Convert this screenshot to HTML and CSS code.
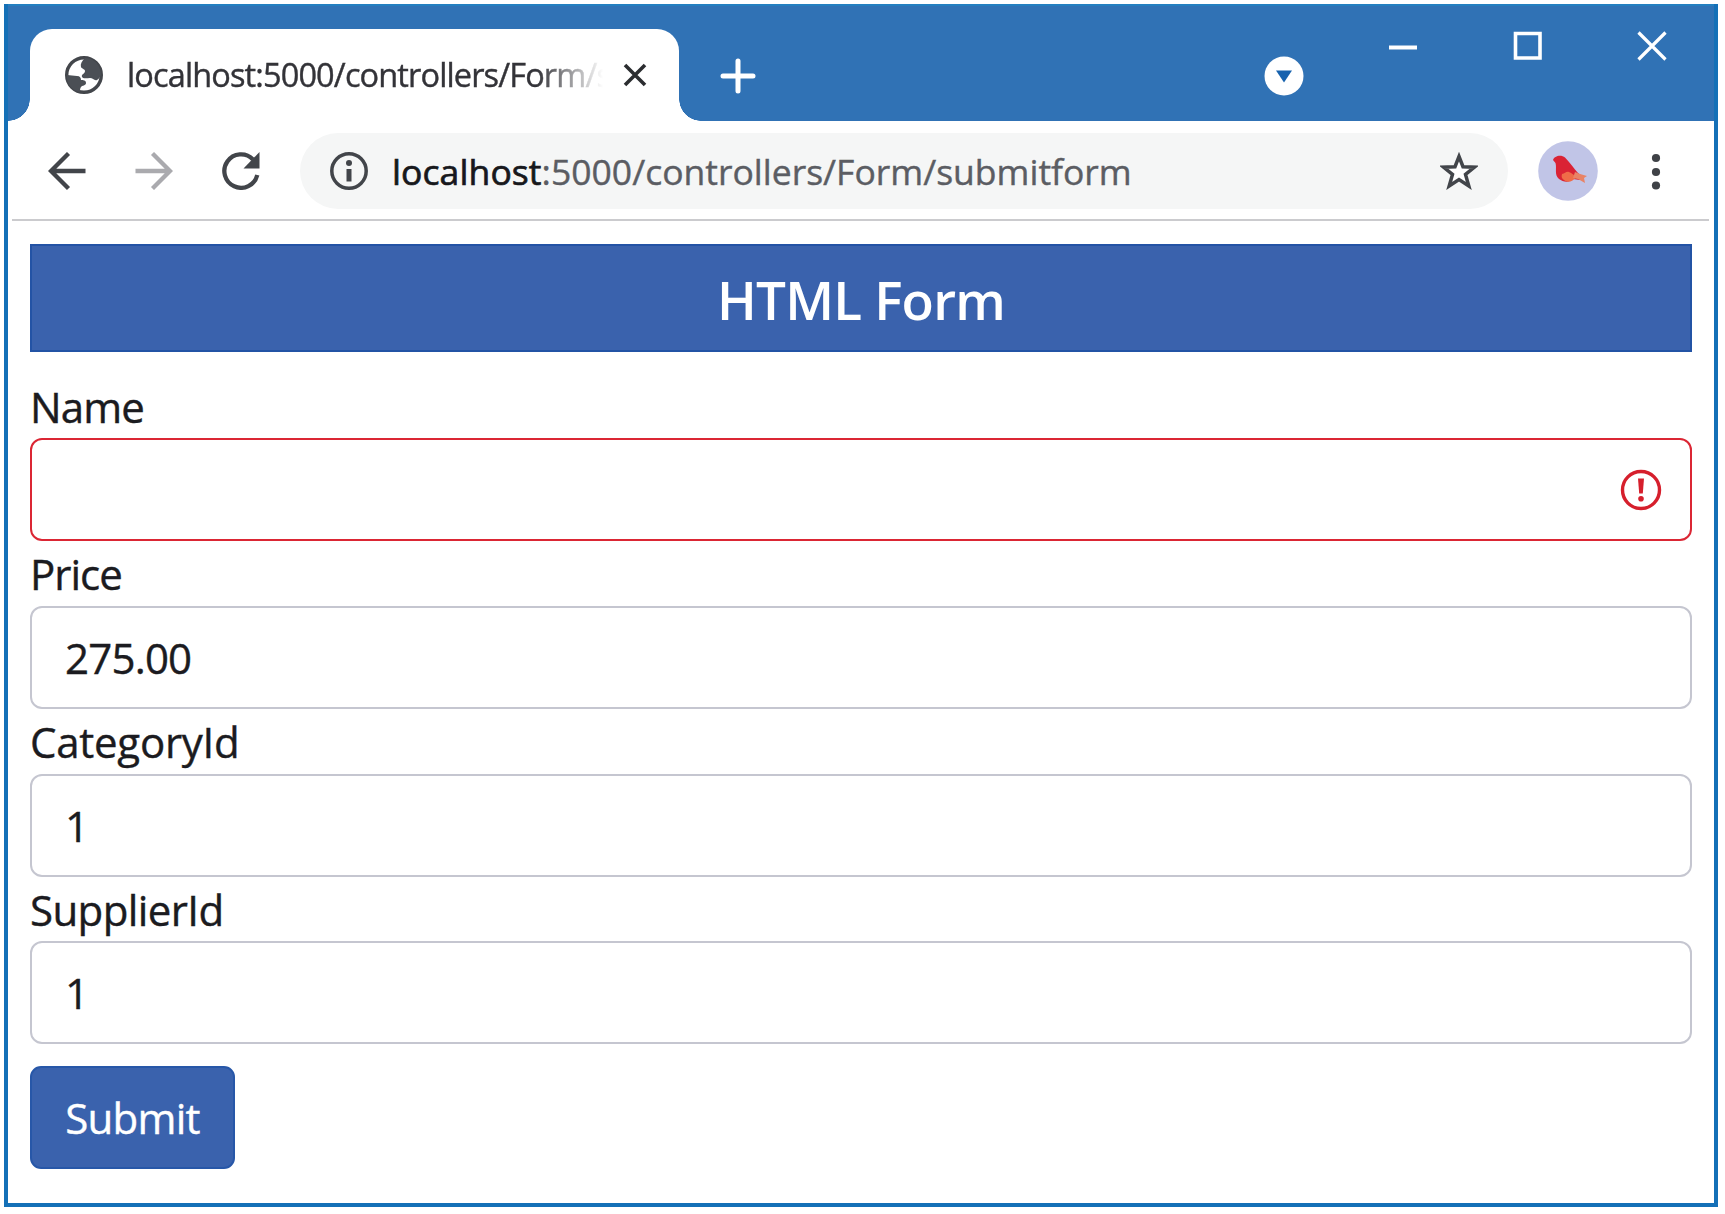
FILE: index.html
```html
<!DOCTYPE html>
<html lang="en">
<head>
<meta charset="utf-8">
<title>HTML Form</title>
<link rel="stylesheet" href="styles.css">
</head>
<body>
<div class="window">
  <header class="titlebar">
    <div class="tab">
      <svg class="globe" viewBox="0 0 38 38"><circle cx="19" cy="19" r="17.3" fill="#fff" stroke="#43464b" stroke-width="3.4"/><path d="M20 2C17 5 15 8 16 11c1 2 4 2 4 4 0 3-4 3-3 6 1 2 5 1 8 1 3 0 4 3 7 2 2-1 3-3 4-5C36 9 29 2 20 2zM2 19l10 1c3 0 4 2 4 4 2 0 5 0 5 3s-4 2-5 4c-1 1-1 3-1 5C7 35 1 27 2 19z" fill="#4b4f55"/></svg>
      <span class="tab-title">localhost:5000/controllers/Form/s</span>
      <svg class="tab-close" viewBox="0 0 24 24"><path d="M2 2l20 20M22 2L2 22" stroke="#2b2d30" stroke-width="3.6"/></svg>
    </div>
    <svg class="new-tab" viewBox="0 0 36 36"><path d="M18 3v30M3 18h30" stroke="#fff" stroke-width="5" stroke-linecap="round"/></svg>
    <svg class="tab-search" viewBox="0 0 40 40"><circle cx="20" cy="20" r="19.5" fill="#fff"/><path d="M12 14.500h16L20 26.500z" fill="#1762ae"/></svg>
    <div class="controls">
      <svg viewBox="0 0 30 30"><path d="M1 16.500h28" stroke="#fff" stroke-width="4"/></svg>
      <svg viewBox="0 0 30 30"><path d="M2.500 2.500h24.500v24.500h-24.500z" stroke="#fff" stroke-width="3.600" fill="none"/></svg>
      <svg viewBox="0 0 30 30"><path d="M1.500 1.500l27 27M28.500 1.500l-27 27" stroke="#fff" stroke-width="3.200"/></svg>
    </div>
  </header>
  <nav class="toolbar">
    <svg class="nav-icon" viewBox="0 0 38 38"><path d="M37.500 19H3M20.500 1.500L3 19l17.500 17.500" fill="none" stroke="#42454a" stroke-width="4.300"/></svg>
    <svg class="nav-icon" viewBox="0 0 38 38"><path d="M.5 19H35M17.500 1.500L35 19 17.500 36.500" fill="none" stroke="#aaaaae" stroke-width="4.300"/></svg>
    <svg class="nav-icon" viewBox="0 0 38 38"><path d="M35.300 23A16.700 16.700 0 1 1 31 7.400" fill="none" stroke="#42454a" stroke-width="4.300"/><path d="M37.500 0v16.500H21.500z" fill="#42454a"/></svg>
    <div class="address">
      <svg class="info" viewBox="0 0 38 38"><circle cx="19" cy="19" r="17.200" fill="none" stroke="#42454a" stroke-width="3.500"/><circle cx="19" cy="11" r="3" fill="#42454a"/><path d="M19 17v12.500" stroke="#42454a" stroke-width="5"/></svg>
      <span class="url"><span class="host">localhost</span><span class="path">:5000/controllers/Form/submitform</span></span>
      <svg class="star" viewBox="0 0 38 38"><path d="M19 4.500l4 10.200 11.500.5-9 7.300 3.300 11.500-9.800-6.400L9.200 34l3.300-11.500-9-7.300 11.500-.5z" fill="#fff" stroke="#42454a" stroke-width="3.500"/></svg>
    </div>
    <svg class="avatar" viewBox="0 0 60 60"><circle cx="30" cy="30" r="29.800" fill="#c1c5e7"/><path d="M15 19c1-4 8-6 12-2.500 5 5 9 11 13 15.500l4 3-2 4-7-1c-4 4-10 3-14 0-5-4-2-11-3.500-16z" fill="#da2334"/><path d="M24 33c3 0 4-3 7-2 3 1 5 3 7 5-3 5-9 6-12 3-2-1-3-3-2-6z" fill="#ef6c48"/><path d="M37 31l5 2 7 2-3 2 1 5-7-4-5-1z" fill="#e98365"/></svg>
    <svg class="menu" viewBox="0 0 10 38"><circle cx="5" cy="5" r="4.100"/><circle cx="5" cy="19" r="4.100"/><circle cx="5" cy="32.500" r="4.100"/></svg>
  </nav>
  <main class="page">
    <h5 class="heading"><span>HTML Form</span></h5>
    <form class="form">
      <div class="group">
        <label class="l-name">Name</label>
        <div class="field invalid"><svg class="error" viewBox="0 0 42 42"><circle cx="21" cy="21" r="18.500" fill="none" stroke="#d61f2c" stroke-width="3.400"/><path d="M18 9.500h6l-1.200 15h-3.600z" fill="#d61f2c"/><circle cx="21" cy="29.800" r="2.800" fill="#d61f2c"/></svg></div>
      </div>
      <div class="group">
        <label class="l-price">Price</label>
        <div class="field"><span>275.00</span></div>
      </div>
      <div class="group">
        <label class="l-category">CategoryId</label>
        <div class="field"><span>1</span></div>
      </div>
      <div class="group">
        <label class="l-supplier">SupplierId</label>
        <div class="field"><span>1</span></div>
      </div>
      <button class="submit" type="button"><span>Submit</span></button>
    </form>
  </main>
</div>
</body>
</html>
```
FILE: styles.css
```css
* { box-sizing: border-box; }
body {
  margin: 0;
  padding: 4px 7px 7px 4px;
  width: 1725px;
  height: 1214px;
  background: #fff;
  font-family: "Open Sans", "Noto Sans", sans-serif;
  color: #1b1b20;
  overflow: hidden;
}
svg { display: block; flex: none; }
.window {
  height: 1203px;
  border: 4px solid #1470b7;
  border-top: 0;
  background: #fff;
}
.titlebar {
  height: 117px;
  display: flex;
  background: #3072b5;
  border-top: 2px solid #237fc0;
  padding-left: 22px;
}
.tab {
  position: relative;
  width: 649px;
  height: 92px;
  margin-top: 23px;
  padding-left: 35px;
  display: flex;
  align-items: center;
  background: #fff;
  border-radius: 22px 22px 0 0;
}
.tab::before, .tab::after {
  content: "";
  position: absolute;
  bottom: 0;
  width: 22px;
  height: 22px;
}
.tab::before { left: -22px; background: radial-gradient(circle at 0 0, transparent 21.500px, #fff 22px); }
.tab::after { right: -22px; background: radial-gradient(circle at 100% 0, transparent 21.500px, #fff 22px); }
.globe { width: 38px; height: 38px; }
.tab-title {
  width: 490px;
  margin-left: 24px;
  white-space: nowrap;
  font-size: 32.500px;
  line-height: 44px;
  letter-spacing: -0.87px;
  color: #333338;
  -webkit-text-stroke: 0.4px #333338;
  -webkit-mask-image: linear-gradient(90deg, #000 410px, transparent 476px);
  mask-image: linear-gradient(90deg, #000 410px, transparent 476px);
}
.tab-close { width: 24px; height: 24px; margin-left: 6px; }
.new-tab { width: 36px; height: 36px; margin: 52px 0 0 41px; }
.tab-search { width: 40px; height: 40px; margin: 50px 0 0 508px; }
.controls { display: flex; gap: 94.500px; margin: 25px 0 0 84px; }
.controls svg { width: 30px; height: 30px; }
.toolbar {
  height: 100px;
  margin: 0 5px 0 4px;
  padding: 0 36px;
  display: flex;
  align-items: flex-start;
  border-bottom: 2px solid #cbcbce;
}
.nav-icon { width: 38px; height: 38px; margin: 30.500px 49px 0 0; }
.nav-icon:nth-child(3) { margin-right: 40px; }
.address {
  width: 1208px;
  height: 76px;
  margin-top: 11.500px;
  padding: 0 30px;
  display: flex;
  align-items: center;
  border-radius: 38px;
  background: #f5f6f6;
}
.info, .star { width: 38px; height: 38px; }
.url {
  margin-left: 24px;
  flex: 1;
  white-space: nowrap;
  font-size: 35.500px;
  line-height: 48px;
  color: #5b5d63;
  -webkit-text-stroke: 0.4px #5b5d63;
}
.host { color: #17181c; letter-spacing: 0.1px; -webkit-text-stroke: 0.7px #17181c; }
.avatar { width: 60px; height: 60px; margin: 20px 0 0 30px; }
.menu { width: 10px; height: 38px; margin: 32px 0 0 53px; fill: #3f4247; }
.page { padding: 22.500px 22px 0; }
.heading {
  margin: 0;
  height: 108px;
  background: #3a62ad;
  border: 2px solid #2353a5;
  color: #fff;
  text-align: center;
  font-size: 53px;
  font-weight: 600;
  line-height: 108px;
  letter-spacing: -0.8px;
}
.form { padding-top: 27px; }
.group { height: 167.800px; font-size: 42px; -webkit-text-stroke: 0.4px #1b1b20; }
label { display: block; width: max-content; height: 59.500px; line-height: 55px; }
.l-name { letter-spacing: -0.9px; }
.l-price { letter-spacing: -1px; }
.l-category { letter-spacing: -0.25px; }
.l-supplier { letter-spacing: -0.6px; }
.field {
  height: 103px;
  border: 2.500px solid #c5c6d0;
  border-radius: 12px;
  padding: 0 28px 0 33px;
  display: flex;
  align-items: center;
  letter-spacing: -0.8px;
}
.invalid { border-color: #db2634; justify-content: flex-end; }
.error { width: 42px; height: 42px; }
.submit {
  display: block;
  margin: 16.500px 0 0;
  width: 205px;
  height: 102.500px;
  padding: 0;
  border: 2px solid #2757a8;
  border-radius: 11px;
  background: #3a62ad;
  color: #fff;
  font: 42px "Open Sans", sans-serif;
  letter-spacing: -0.7px;
  -webkit-text-stroke: 0.4px #fff;
}
```
